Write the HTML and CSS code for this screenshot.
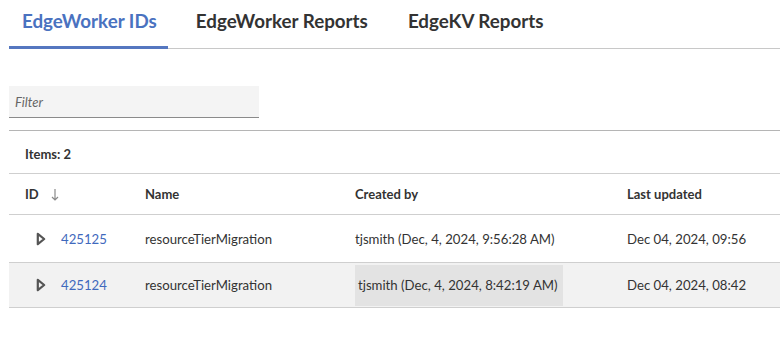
FILE: index.html
```html
<!DOCTYPE html>
<html>
<head>
<meta charset="utf-8">
<link rel="stylesheet" href="styles.css">
</head>
<body>
<div class="page">
  <nav class="tabs">
    <div class="tab active">EdgeWorker IDs</div>
    <div class="tab">EdgeWorker Reports</div>
    <div class="tab">EdgeKV Reports</div>
  </nav>
  <div class="filter"><span class="placeholder">Filter</span></div>
  <div class="table">
    <div class="items">Items: 2</div>
    <div class="row head">
      <div class="cell id-head">ID <svg class="sort" width="8" height="13" viewBox="0 0 8 13"><path d="M4 1v11M1 9l3 3 3-3" fill="none" stroke="#8a8a8a" stroke-width="1.2"/></svg></div>
      <div class="cell">Name</div>
      <div class="cell">Created by</div>
      <div class="cell">Last updated</div>
    </div>
    <div class="row r1">
      <div class="cell id-cell"><svg class="caret" width="10" height="14" viewBox="0 0 10 14"><path d="M1.8 1.8L8.2 7 1.8 12.2Z" fill="none" stroke="#555" stroke-width="2.2" stroke-linejoin="round"/></svg><a class="link">425125</a></div>
      <div class="cell">resourceTierMigration</div>
      <div class="cell">tjsmith (Dec, 4, 2024, 9:56:28 AM)</div>
      <div class="cell">Dec 04, 2024, 09:56</div>
    </div>
    <div class="row r2">
      <div class="cell id-cell"><svg class="caret" width="10" height="14" viewBox="0 0 10 14"><path d="M1.8 1.8L8.2 7 1.8 12.2Z" fill="none" stroke="#555" stroke-width="2.2" stroke-linejoin="round"/></svg><a class="link">425124</a></div>
      <div class="cell">resourceTierMigration</div>
      <div class="cell"><span class="hl">tjsmith (Dec, 4, 2024, 8:42:19 AM)</span></div>
      <div class="cell">Dec 04, 2024, 08:42</div>
    </div>
  </div>
</div>
</body>
</html>
```

FILE: styles.css
```css
* { box-sizing: border-box; }
html, body { margin: 0; padding: 0; background: #fff; }
body {
  font-family: "Lato", "Noto Sans", sans-serif;
  color: #333;
  width: 780px;
  height: 345px;
  overflow: hidden;
}
.page { padding-left: 9px; }

.tabs {
  display: flex;
  gap: 15px;
  height: 49px;
  border-bottom: 1px solid #c8c8c8;
}
.tab {
  padding: 9px 12px 0 13px;
  height: 49px;
  font-size: 18.8px;
  line-height: 24px;
  font-weight: 700;
  color: #333;
  border-bottom: 3px solid transparent;
}
.tab.active {
  padding-right: 11px;
  color: #4a72c0;
  border-bottom-color: #5577c0;
}

.filter {
  margin-top: 37px;
  width: 250px;
  height: 32px;
  background: #f4f4f4;
  border-bottom: 1px solid #8a8a8a;
  padding: 0 6px;
  display: flex;
  align-items: center;
}
.placeholder {
  font-style: italic;
  font-size: 13px;
  color: #666;
}

.table {
  margin-top: 12px;
  border-top: 1px solid #b5b5b5;
  font-size: 13.2px;
}
.items {
  height: 42px;
  padding: 16px 0 0 16px;
  font-size: 13px;
  font-weight: 700;
  line-height: 14px;
}
.row {
  display: grid;
  grid-template-columns: 136px 210px 272px 1fr;
  align-items: center;
  border-top: 1px solid #cfcfcf;
}
.row.head { height: 41px; font-size: 13px; font-weight: 700; }
.row.r1 { height: 48px; }
.row.r2 { height: 46px; background: #f2f2f2; border-bottom: 1px solid #cfcfcf; }
.cell { white-space: nowrap; }
.id-head { padding-left: 16px; display: flex; align-items: center; gap: 12px; }
.sort { display: block; }
.id-cell { padding-left: 27px; display: flex; align-items: center; gap: 15px; }
.caret { display: block; }
.link { color: #3f69bd; text-decoration: none; }
.hl {
  display: inline-block;
  height: 41px;
  line-height: 41px;
  padding: 0 5px 0 3px;
  background: #e3e3e3;
}
```
